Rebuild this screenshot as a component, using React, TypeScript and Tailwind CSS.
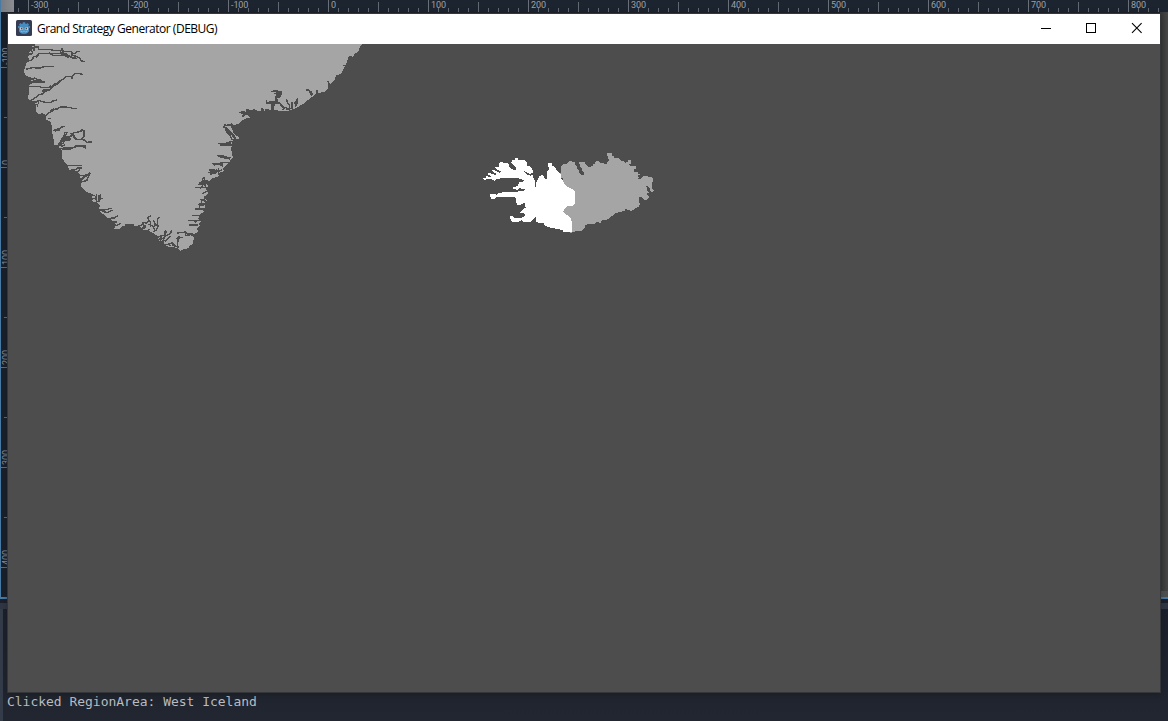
import React from "react";

const columns = Array.from({ length: 12 }, (_, i) => -300 + i * 100);
const rows = [-100, 0, 100, 200, 300, 400];
const ticks = Array.from({ length: 116 }, (_, i) => i);

function TopRuler() {
  return (
    <svg className="block h-[12px] w-[1154px] bg-[#1c2430]" viewBox="14 0 1154 12" shapeRendering="crispEdges">
      {ticks.map((i) => {
        const x = 18 + i * 10;
        const major = (i - 1) % 10 === 0;
        const half = (i - 1) % 5 === 0;
        return (
          <rect key={i} x={x} y={major ? 0 : half ? 2 : 8} width={1} height={12} fill={major ? "#69707a" : "#626973"} />
        );
      })}
      {columns.map((n, i) => (
        <text key={n} x={31 + i * 100} y={8.4} className="font-['Roboto',sans-serif] text-[9px] tracking-[-0.1px]" fill="#9ca0a5">
          {n}
        </text>
      ))}
    </svg>
  );
}

function LeftRuler() {
  return (
    <svg className="block h-[585px] w-[8px] overflow-visible bg-[#1a202a]" viewBox="0 12 8 585">
      <rect x="0" y="12" width="1" height="585" fill="#477aa5" />
      <g shapeRendering="crispEdges">
        {rows.map((n, i) => (
          <g key={n} fill="#656d76">
            <rect x="0" y={67 + i * 100} width="8" height="1" />
            {i < 5 && <rect x="4" y={117 + i * 100} width="4" height="1" />}
          </g>
        ))}
      </g>
      {rows.map((n, i) => (
        <text
          key={n}
          transform={`translate(9 ${65 + i * 100}) rotate(-90)`}
          className="font-['Roboto',sans-serif] text-[9px] tracking-[-0.1px]"
          fill="#8a9097"
        >
          {n}
        </text>
      ))}
    </svg>
  );
}

function AppIcon() {
  return (
    <svg className="size-4" viewBox="0 0 16 16">
      <rect width="16" height="16" rx="1.5" fill="#363d52" />
      <path
        d="M3 4.5 4.5 3l1.3 1 .8-.3.3-1.4h2.2l.3 1.4.8.3 1.3-1L13 4.5l-.7 1.2.4.9 1.3-.8v2l-1 .5v2.2c0 2-2.2 3.4-5 3.4s-5-1.4-5-3.4V8.3l-1-.5v-2l1.3.8.4-.9z"
        fill="#478cbf"
      />
      <circle cx="5.4" cy="8.4" r="1.5" fill="#e8f0f6" />
      <circle cx="10.6" cy="8.4" r="1.5" fill="#e8f0f6" />
      <circle cx="5.6" cy="8.5" r=".9" fill="#414042" />
      <circle cx="10.4" cy="8.5" r=".9" fill="#414042" />
      <path d="M8 8v1.8M3.5 11h2v1h1.6v-1h1.8v1h1.6v-1h2" stroke="#a9c9e0" strokeWidth=".5" fill="none" />
    </svg>
  );
}

function TitleBar() {
  return (
    <header className="flex h-[30px] items-center bg-white pl-2 text-black">
      <div className="-mt-[2px]"><AppIcon /></div>
      <h1 className="ml-[5px] flex-1 whitespace-nowrap font-['Open_Sans','Noto_Sans',sans-serif] text-[12px] font-normal leading-[16px] tracking-[-0.48px]">
        Grand Strategy Generator (DEBUG)
      </h1>
      <svg className="h-[30px] w-[137px]" viewBox="1023 14 137 30" fill="none" stroke="#000">
        <path d="M1041 28.5h10" shapeRendering="crispEdges" />
        <path d="M1086.5 23.5h9v9h-9z" shapeRendering="crispEdges" />
        <path d="m1132 23.2 9.6 9.6m0-9.6-9.6 9.6" strokeWidth="1.1" />
      </svg>
    </header>
  );
}

function RegionMap() {
  return (
    <svg className="block h-[648px] w-[1152px]" viewBox="8 44 1152 648" shapeRendering="crispEdges">
      <path
        fill="#a5a5a5"
        d="M32 44L32 47 36 48 31 50 29 53 32 54 28 56 29 59 27 62 25 67 24 72 26 76 32 78 31 81 35 82 29 85 29 94 28 97 29 100 34 102 36 105 36 112 39 114 42 113 46 115 46 120 50 121 52 126 52 132 54 141 54 145 58 147 62 151 62 158 67 165 70 171 76 172 80 177 82 180 81 187 87 192 92 194 92 201 97 203 100 206 98 210 103 214 108 218 112 220 116 225 114 229 120 229 121 227 126 225 127 224 134 224 135 227 140 226 143 230 148 230 153 233 158 236 159 241 164 241 165 246 171 247 177 248 180 251 184 249 189 248 189 246 193 244 194 237 190 235 197 233 198 231 196 229 200 226 198 224 201 221 198 219 200 214 204 212 203 209 205 207 205 202 207 201 204 197 208 193 206 189 208 186 207 183 213 178 219 176 218 173 224 171 223 168 230 162 230 160 233 158 232 153 231 149 232 146 232 141 237 139 240 138 234 134 232 129 230 127 233 125 239 124 242 120 245 119 247 118 250 118 247 115 243 114 246 111 252 110 261 111 268 110 287 111 296 108 303 104 312 97 317 93 325 92 328 88 328 82 331 84 335 79 336 75 341 74 344 68 347 62 348 58 353 57 355 53 358 52 360 47 362 44Z"
      />
      <g fill="none" stroke="#4d4d4d" strokeWidth="4.3" strokeLinejoin="round">
        <g transform="translate(10 40) scale(.33333)">
          <path d="M64 15h9v6h12v7h37l8 4h22l4-6 4 9h25l3 10 23 10v7l13 3M52 65l14-6 5-8 8-3 4-5 9-3h58l18 9h15l4-7 9-2 4-6h10M60 27l8 9-4 8M72 22v12M116 38l15 9h32M151 36l20 7 12 10 17 2M47 88l19-5 26 1 12-5h29M63 181l16-10 8-7 12-3 8-7 15-6 9-11 11-6 9-9 12-7 5-5 17-1 10-8 8-1 17 4M183 114h5M55 140h34l7 3h22l5-5M65 120l8-6 7 4h9l4 6h12M69 127h35M64 116h17M61 182l15 5 12-5 18 5h19l3-4 12-3M78 187l7-5v10M80 191l4 8M107 229l9-11 10-4 8-6 7-1 11-6h14l18 2 5 3h12M114 235h9M129 272l10-4 10-1 5-6 10-1M133 317l8 3 6-5 4-7 10-5 2-6h18M147 312l20-21 17-3 7-10 20-3 7-7M151 304l13-19v-8h7l-6 14M164 302h14v-12l-14 3M190 289l9 9 14 1 9-8v-22M181 280l13 7M212 297l13 4 6 6 14-1M148 326l30-4 9 3 9-7 22 1 10 5" />
          <path strokeWidth="7" d="M157 44h11l9 9M96 153l18-4M128 138l8-8M172 296l10 2M137 320l9-4M70 123h20l10 3M135 135l10-6M120 213l12-5M76 51l10-6M133 272l16-4" />
        </g>
        <g transform="translate(40 130) scale(.33333)">
          <path d="M57 47l12-7 8-17M66 57h26l20-9h25v4M64 49l12-5M81 107h45M86 121l19-1 8-6h14M97 125l17-1 5-6M108 126l14 11 20-2 8-8M122 156l18-4 6-13 5-10M125 148l9-9h7M151 194l14 3M152 207l18-2v13M170 193l-4 16M182 191v15l-8 10M182 206h6M172 241l19-2h12l5-3h9M185 243l17 5 15-8M206 265l17-1 10-7M217 276h15M226 288l17-8M285 291l18-5 8-9 9 2M303 297l11-9-8-10M310 298l8-11M317 303l12-4M316 282l10-10-2-10 10-5M325 283l13 4 9 17M332 292v-14l-7-9M338 292l15-10v-17l7-3M340 270l6 14M340 305l10-6 5-14M354 321l12-5-8 15M361 331l12-10 7-18M368 333l8-14 16-9 3-10M372 319l4-18M374 334l17-16M375 346l12-5h16M386 341l5 7M397 342l12 7-9 4M398 348l-2-11M414 355l-2-20 5-14 11 2M412 309l25-3 12 10M416 336l-5-12 12-1M436 308v9h14M440 312h19M448 285h27M445 271h35M463 271l6 6M457 256h33M466 237h29M478 237v-9l16-7M473 223l19 3M485 222v-11l17 4M466 172h38M480 176l12-15 17-2M488 162l-1-15 8-5M475 163h22M498 174l-8-18h18M496 184h9" />
          <path strokeWidth="7" d="M65 57h27M182 240h14M255 287h26M178 195v20" />
        </g>
        <g transform="translate(170 110) scale(.33333)">
          <path d="M197 89l-11-1-8-14-9-9-2-12-5-1 2-7 15 2 7-6M171 55l14 13 5 8M144 101h17l10 4h20M150 107h38M163 101l23-7 18-1M141 137h18l10 5 15 1M157 142l19 4M126 160h22l9-3 21 1M131 165l13-3 15 6M116 180h16l6 6 8-4M115 188h17l7-8 9 3 9-5M146 174v14M120 193l17-4M130 185l-5 8M82 233h33M93 223h11v-21M99 213l12-2v7M88 220l14-8M97 252l11-7M102 260h14M91 269h13v-9" />
          <path strokeWidth="7" d="M170 46h20M168 53l9 14 12 8 9 16M150 104h34M143 138l22 3 15 5M129 162h30M120 183h15M86 282h18M90 221l12-9" />
        </g>
        <g transform="translate(180 40) scale(.33333)">
          <path d="M272 154l19-1v3h14M282 160h23l-5 10-9 3-4 10-10 4M292 160l-5 14 6 8-10 7-3 15-6 2M259 180l2 9 20 1 20-1M300 190l8 8 5 7-5 5M320 178l3 12 5 6v11M314 201l12 7M336 186v19l-13 3M348 193v-9l5-9v17M345 185l2 17M378 149l9 2 7 13M411 151v12M443 123l4 9 9 4M488 76l9 1M504 52l13-2M222 206l3 10M199 206l6 15M178 217l14 4M186 231l12-12 11 4M246 204v12M256 210h12" />
          <path strokeWidth="8" d="M277 185v27M268 187l30 2M302 194l10 10M390 154l7 12M183 216l12 3M202 208v16M222 206v10M288 157l10 8-12 10M286 174l5 8M318 207h10M346 190l6 4M248 208v6" />
        </g>
      </g>
      <g transform="translate(475 145) scale(.33333)">
        <path
          fill="#a5a5a5"
          d="M258 99L256 84 258 80 258 65 263 60 263 57 277 57 277 53 284 49 296 50 300 54 300 60 306 66 306 70 311 74 313 82 318 90 327 90 327 82 322 78 322 70 316 66 316 60 313 56 313 51 330 51 332 57 340 65 345 68 348 62 354 62 354 56 360 56 360 50 370 48 376 54 384 54 390 57 395 57 395 52 403 48 399 40 397 30 395 24 410 24 411 32 418 35 418 39 431 40 438 48 448 50 452 54 458 50 458 44 468 44 470 55 460 58 467 62 483 64 483 70 478 72 478 82 490 82 490 86 497 88 484 93 492 96 490 101 498 102 505 93 530 96 534 102 534 110 530 114 532 130 537 137 529 142 525 133 520 124 514 122 516 135 522 142 514 148 522 156 516 164 508 165 498 156 492 158 494 180 490 186 482 190 470 197 458 196 452 190 448 198 430 202 420 206 406 217 400 223 380 227 376 234 366 231 358 237 344 236 332 240 328 252 318 258 303 259 290 263 265 261 265 99Z"
        />
        <path
          fill="#fff"
          d="M256 84L258 100 264 108 270 118 280 127 292 133 299 140 299 175 294 182 278 184 270 190 265 200 270 207 280 213 288 222 291 235 291 262 266 261 262 255 250 252 228 249 210 242 206 234 184 232 183 216 168 230 146 230 140 226 132 230 112 231 106 222 106 212 114 212 116 218 140 218 150 212 150 206 135 203 143 194 152 188 148 184 151 178 150 172 138 178 134 181 126 180 127 174 123 172 124 160 116 156 90 156 64 157 60 162 50 162 45 154 46 148 58 147 66 150 72 144 84 142 125 140 145 138 150 132 134 130 128 134 115 133 114 128 128 122 132 113 140 110 154 108 144 106 138 102 128 100 80 100 64 102 58 108 50 103 36 101 32 106 24 102 24 99 34 99 34 94 50 96 39 88 39 84 50 86 64 92 64 87 55 81 51 74 57 75 74 83 78 80 62 71 61 66 74 66 71 60 74 53 84 49 86 54 100 55 102 63 104 68 117 75 123 74 122 67 112 57 108 52 112 46 120 43 120 39 128 39 128 44 148 46 156 54 157 62 168 65 173 76 173 83 165 87 156 82 148 79 155 89 166 92 172 90 180 108 181 125 184 125 184 112 190 102 192 95 204 88 208 100 215 102 217 80 222 74 222 68 217 60 220 53 230 54 232 62 242 68 244 76 252 82Z"
        />
      </g>
    </svg>
  );
}

export default function App() {
  return (
    <div className="relative h-[721px] w-[1168px] overflow-hidden bg-[#20252f]">
      <div className="flex h-full flex-col">
        <div className="flex h-[12px] shrink-0">
          <div className="w-[14px] border-l border-[#477aa5] bg-gradient-to-r from-[#777b82] to-[#8c8e92]" />
          <TopRuler />
        </div>
        <div className="flex h-[585px] shrink-0 justify-between bg-[#1d2128]">
          <LeftRuler />
          <div className="w-2 border-b-[6px] border-[#505050] bg-gradient-to-r from-[#363636] to-[#474747]" />
        </div>
        <div className="h-[2px] shrink-0 bg-[#477aa5]" />
        <div className="h-1 shrink-0 bg-[#1b202a]" />
        <div className="h-[6px] shrink-0 bg-[#303744]" />
        <div className="flex flex-1 flex-col justify-end border-l-[3px] border-[#343c4a] bg-gradient-to-b from-[#1b202a] to-[#222630] pb-[10px] pl-1">
          <p className="whitespace-pre font-['DejaVu_Sans_Mono',monospace] text-[13px] leading-[18px] tracking-[-0.02px] text-[#b9bcc0]">
            Clicked RegionArea: West Iceland
          </p>
        </div>
      </div>
      <main className="absolute left-[8px] top-[14px] h-[678px] w-[1152px] bg-[#4d4d4d] shadow-[0_0_0_1px_#34363a,0_2px_6px_#11141980]">
        <TitleBar />
        <RegionMap />
      </main>
    </div>
  );
}
